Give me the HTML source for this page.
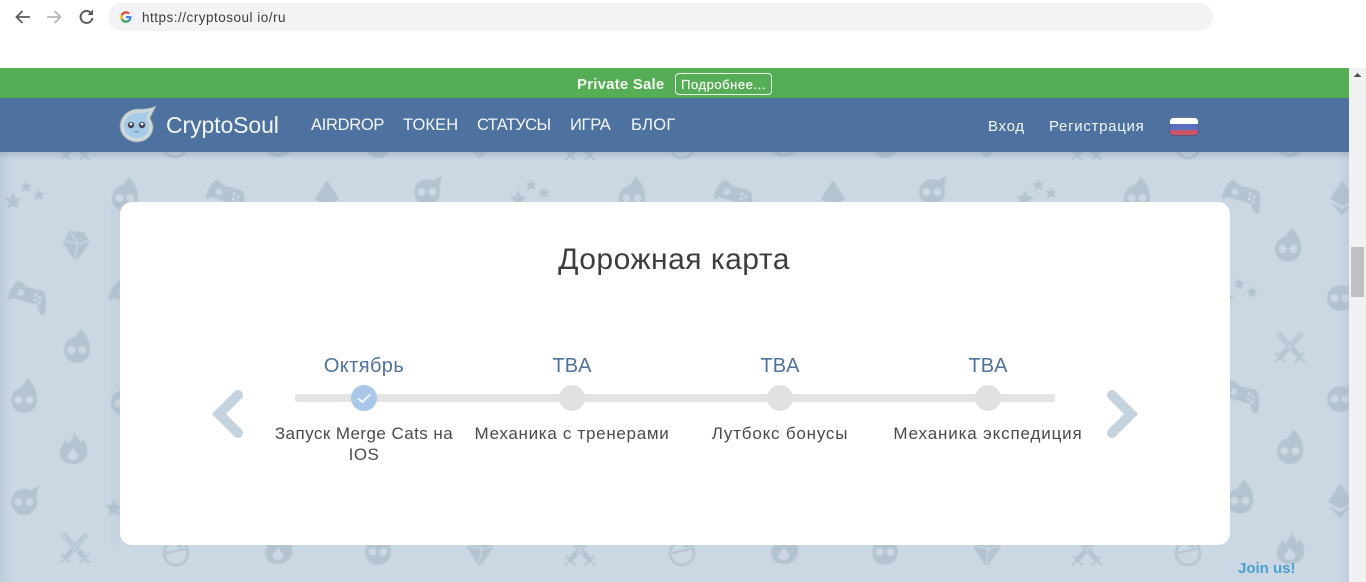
<!DOCTYPE html>
<html lang="ru">
<head>
<meta charset="utf-8">
<title>CryptoSoul</title>
<style>
html,body{margin:0;padding:0;width:1366px;height:582px;overflow:hidden;background:#fff;font-family:"Liberation Sans",sans-serif}
.a{position:absolute;white-space:nowrap}
#page{position:relative;width:1366px;height:582px;overflow:hidden}
.c{transform:translateX(-50%);text-align:center}
</style>
</head>
<body>
<div id="page">
<!-- browser bar -->
<svg class="a" style="left:12px;top:6px" width="90" height="22" viewBox="0 0 90 22" fill="none">
<path d="M18 11H5M10.500 5L4.500 11l6 6" stroke="#5a5d60" stroke-width="1.800"/>
<path d="M35 11H48M42.500 5l6 6-6 6" stroke="#b4b6b8" stroke-width="1.800"/>
<path d="M79.500 7.500A6 6 0 1 0 80.500 12" stroke="#5a5d60" stroke-width="2"/>
<path d="M75.500 9h5.500V3.500z" fill="#5a5d60"/>
</svg>
<div class="a" style="left:108px;top:3px;width:1105px;height:28px;border-radius:14px;background:#f1f3f4"></div>
<svg class="a" style="left:120px;top:11px" width="12" height="12" viewBox="0 0 48 48">
<path fill="#4285F4" d="M46 24.500c0-1.600-.1-3.100-.4-4.500H24v9h12.400c-.5 2.900-2.100 5.300-4.600 7l7.300 5.600C43.400 37.700 46 31.700 46 24.500z"/>
<path fill="#34A853" d="M24 47c6.200 0 11.400-2 15.100-5.500l-7.300-5.600c-2 1.400-4.700 2.200-7.800 2.200-6 0-11-4-12.800-9.500L3.700 34.400C7.400 41.900 15.100 47 24 47z"/>
<path fill="#FBBC05" d="M11.200 28.600c-.5-1.400-.7-3-.7-4.600s.3-3.200.7-4.600l-7.500-5.800C2.100 16.700 1 20.200 1 24s1.100 7.300 2.700 10.400z"/>
<path fill="#EA4335" d="M24 10c3.400 0 6.400 1.200 8.800 3.400l6.500-6.500C35.400 3.300 30.200 1 24 1 15.100 1 7.400 6.100 3.700 13.600l7.500 5.800C13 14 18 10 24 10z"/>
</svg>
<div class="a" style="left:142px;top:10px;font-size:13.500px;line-height:15px;color:#3c4043;letter-spacing:.5px">https://cryptosoul io/ru</div>

<!-- page background -->
<div class="a" id="bg" style="left:0;top:68px;width:1349px;height:514px;background:#cbd8e4"></div>

<svg class="a" style="left:0;top:68px;filter:blur(.6px)" width="1349" height="514" viewBox="0 68 1349 514" fill="#b3c3d0">
<defs>
<g id="bomb"><circle cx="0" cy="2" r="13"/><path d="M6-9L15-15 12-3z"/><circle cx="-5.500" cy="2" r="4" fill="#cbd8e4"/><circle cx="5.500" cy="2" r="4" fill="#cbd8e4"/></g>
<g id="bombf"><circle cx="0" cy="3" r="13"/><path d="M-2-9C-1-14 3-15 3-19 9-13 13-8 13 3L4-5z"/><circle cx="-5.500" cy="3" r="4" fill="#cbd8e4"/><circle cx="5.500" cy="3" r="4" fill="#cbd8e4"/></g>
<g id="stars"><path d="M-12-6l2.500 6 6.500.5-5 4 1.500 6.500-5.500-3.500-5.500 3.500 1.500-6.500-5-4 6.500-.5z"/><path d="M1-17l1.700 3.800 4.300.4-3.200 2.800 1 4.200-3.800-2.200-3.800 2.200 1-4.200-3.200-2.800 4.300-.4z"/><path d="M14-9l1.700 3.800 4.300.4-3.200 2.800 1 4.200-3.800-2.200-3.800 2.200 1-4.200-3.200-2.800 4.300-.4z"/></g>
<g id="pad"><path d="M-9-17C-5-17-3-13 0-11L16-7C20-4 20 6 18 15 16 18 13 17 12 13L10 7-14 0C-16 2-18 3-19 1-19-5-14-14-9-17z"/><path d="M-8-10l2 2.500 3-1-1 3 2 2-3 .5-1 3-1.500-3-3-.5 2-2z" fill="#cbd8e4"/><circle cx="9" cy="-3" r="1.600" fill="#cbd8e4"/><circle cx="13" cy="0" r="1.600" fill="#cbd8e4"/><circle cx="8" cy="2" r="1.600" fill="#cbd8e4"/><circle cx="12" cy="5" r="1.600" fill="#cbd8e4"/></g>
<g id="eth"><path d="M0-17L12 2 0 9-12 2z"/><path d="M-11 6L0 12 11 6 0 19z"/></g>
<g id="dia"><path d="M-7-14L8-13 14-3 2 14-2 15-13-2z"/><path d="M-1 13L2-1 13-4M2-1L-11-4M2-1L-5-12" stroke="#cbd8e4" stroke-width="1.300" fill="none"/></g>
<g id="sw" fill="none" stroke="#b3c3d0"><path d="M-12-14L9 9" stroke-width="5"/><path d="M12-14L-9 9" stroke-width="5"/><path d="M-13-15L3 3M13-15L-3 3" stroke="#cbd8e4" stroke-width="1"/><path d="M5 15L14 6M-5 15L-14 6M10 11L15 15M-10 11L-15 15" stroke-width="2"/></g>
<g id="smile"><circle r="12" fill="none" stroke="#b3c3d0" stroke-width="2.500"/><path d="M-10 0L9-4" stroke="#b3c3d0" stroke-width="2"/><path d="M1-11l6 1-1 5-5-1z"/></g>
<g id="fl"><path d="M1-19C3-12 7-12 7-7 9-9 10-10 10-11 14-6 15 0 14 4 12 11 6 14 0 14-7 14-13 10-13 3-13-3-9-6-8-11-6-9-5-7-5-6-2-9 1-13 1-19z"/><path d="M0-3C1 1 6 2 5 7 3 11-3 11-5 8-7 4-2 2 0-3z" fill="#cbd8e4"/></g>
</defs>
<!-- row under nav -->
<use href="#sw" x="75" y="145"/><use href="#smile" x="175" y="145"/><use href="#fl" x="278" y="143"/><use href="#bomb" x="378" y="143"/><use href="#dia" x="480" y="143"/><use href="#sw" x="580" y="145"/><use href="#smile" x="682" y="146"/><use href="#fl" x="784" y="143"/><use href="#bomb" x="885" y="143"/><use href="#dia" x="987" y="143"/><use href="#sw" x="1087" y="145"/><use href="#smile" x="1188" y="146"/><use href="#fl" x="1290" y="143"/>
<!-- top row -->
<use href="#stars" x="25" y="198"/><use href="#bombf" x="125" y="195"/><use href="#pad" x="225" y="197"/><use href="#eth" x="327" y="197"/><use href="#bomb" x="427" y="190"/><use href="#stars" x="530" y="196"/><use href="#bombf" x="632" y="195"/><use href="#pad" x="733" y="197"/><use href="#eth" x="833" y="197"/><use href="#bomb" x="932" y="190"/><use href="#stars" x="1037" y="196"/><use href="#bombf" x="1137" y="195"/><use href="#pad" x="1241" y="197"/><use href="#eth" x="1342" y="197"/>
<!-- left column -->
<use href="#dia" x="76" y="245"/><use href="#pad" x="27" y="298"/><use href="#pad" x="128" y="298"/><use href="#bombf" x="77" y="347"/><use href="#bombf" x="24" y="397"/><use href="#bombf" x="124" y="400"/><use href="#fl" x="73" y="450"/><use href="#bomb" x="24" y="500"/><use href="#stars" x="126" y="505"/><use href="#sw" x="75" y="548"/>
<!-- right column -->
<use href="#bombf" x="1288" y="246"/><use href="#stars" x="1238" y="295"/><use href="#bomb" x="1340" y="296"/><use href="#sw" x="1290" y="347"/><use href="#pad" x="1240" y="397"/><use href="#bomb" x="1340" y="397"/><use href="#bombf" x="1290" y="448"/><use href="#bombf" x="1240" y="498"/><use href="#eth" x="1340" y="500"/><use href="#fl" x="1290" y="550"/>
<!-- bottom row -->
<use href="#smile" x="176" y="553"/><use href="#fl" x="278" y="550"/><use href="#bomb" x="378" y="550"/><use href="#dia" x="480" y="550"/><use href="#sw" x="580" y="550"/><use href="#smile" x="682" y="553"/><use href="#fl" x="784" y="550"/><use href="#bomb" x="885" y="550"/><use href="#dia" x="987" y="550"/><use href="#sw" x="1087" y="550"/><use href="#smile" x="1188" y="553"/>
</svg>

<!-- soft shading over the pattern -->
<div class="a" style="left:0;top:152px;width:12px;height:430px;background:linear-gradient(90deg,rgba(165,185,200,.4),rgba(165,185,200,0))"></div>
<div class="a" style="left:100px;top:202px;width:20px;height:343px;background:linear-gradient(90deg,rgba(165,185,200,0),rgba(165,185,200,.22))"></div>
<div class="a" style="left:1339px;top:152px;width:10px;height:430px;background:linear-gradient(90deg,rgba(165,185,200,0),rgba(165,185,200,.35))"></div>
<div class="a" style="left:0;top:152px;width:1349px;height:8px;background:linear-gradient(rgba(120,140,160,.35),rgba(120,140,160,0))"></div>

<!-- scrollbar -->
<div class="a" style="left:1349px;top:68px;width:17px;height:514px;background:#f1f1f1"></div>
<div class="a" style="left:1351px;top:247px;width:13px;height:50px;background:#c1c1c1"></div>
<svg class="a" style="left:1352px;top:72px" width="11" height="6"><path d="M1.500 5L5.500 1 9.500 5z" fill="#505050"/></svg>

<!-- promo bar -->
<div class="a" style="left:0;top:68px;width:1349px;height:30px;background:#55ae55"></div>
<div class="a" style="left:577px;top:76px;font-size:15px;line-height:17px;font-weight:bold;color:#f4faf4;letter-spacing:.2px">Private Sale</div>
<div class="a" style="left:675px;top:73px;width:95px;height:20px;border:1px solid #eef7ee;border-radius:4px;font-size:13px;line-height:21px;text-align:center;color:#f8fcf8;letter-spacing:.55px;-webkit-text-stroke:.2px #f8fcf8">Подробнее...</div>

<!-- nav -->
<div class="a" style="left:0;top:98px;width:1349px;height:54px;background:#4d729f"></div>
<svg class="a" style="left:118px;top:103px" width="40" height="40" viewBox="0 0 40 40">
<path d="M38 3C31 6 26 6 20 6 10 6 2 14 2 23 2 32 10 39 19 39 29 39 36 31 35 22 34 19 33 17 32 15z" fill="#cdd8db" stroke="#8e9da6" stroke-width=".8"/>
<path d="M32 8C28 10 24 10 20 10 12 10 6 16 6 23 6 30 12 35 19 35 27 35 32 29 31 22 30 19 29 17 28 15z" fill="#a5cbe8"/>
<circle cx="13" cy="22" r="3.200" fill="#4a4256"/><circle cx="24" cy="22" r="3.200" fill="#4a4256"/>
<circle cx="13" cy="21" r="1.400" fill="#f2f2ff"/><circle cx="24" cy="21" r="1.400" fill="#f2f2ff"/>
<path d="M16 28q2.500 2 5 0" stroke="#6f8bb0" fill="none"/>
</svg>
<div class="a" style="left:166px;top:112px;font-size:23px;line-height:27px;color:#f3f6fa;letter-spacing:-.1px">CryptoSoul</div>
<div class="a" style="left:311px;top:116px;font-size:16.500px;line-height:19px;color:#f3f6fa;letter-spacing:-.3px">AIRDROP</div>
<div class="a" style="left:403px;top:116px;font-size:16.500px;line-height:19px;color:#f3f6fa;letter-spacing:.1px">ТОКЕН</div>
<div class="a" style="left:477px;top:116px;font-size:16.500px;line-height:19px;color:#f3f6fa;letter-spacing:-.6px">СТАТУСЫ</div>
<div class="a" style="left:570px;top:116px;font-size:16.500px;line-height:19px;color:#f3f6fa;letter-spacing:-.3px">ИГРА</div>
<div class="a" style="left:631px;top:116px;font-size:16.500px;line-height:19px;color:#f3f6fa;letter-spacing:.3px">БЛОГ</div>
<div class="a" style="left:988px;top:118px;font-size:15px;line-height:18px;color:#f3f6fa;letter-spacing:.7px">Вход</div>
<div class="a" style="left:1049px;top:118px;font-size:15px;line-height:18px;color:#f3f6fa;letter-spacing:.7px">Регистрация</div>
<svg class="a" style="left:1169px;top:117px" width="30" height="19" viewBox="0 0 30 19">
<defs><clipPath id="fc"><rect x=".5" y=".5" width="29" height="18" rx="4"/></clipPath></defs>
<g clip-path="url(#fc)"><rect width="30" height="7" fill="#fff"/><rect y="7" width="30" height="6" fill="#5a6fc0"/><rect y="13" width="30" height="6" fill="#c9566a"/></g>
<rect x=".5" y=".5" width="29" height="18" rx="4" fill="none" stroke="#3e4d66" stroke-opacity=".6"/>
</svg>

<!-- card -->
<div class="a" style="left:120px;top:202px;width:1110px;height:343px;background:#fff;border-radius:12px"></div>
<div class="a c" style="left:674px;top:242px;font-size:30px;line-height:36px;color:#3d3d3d;letter-spacing:.5px">Дорожная карта</div>

<div class="a" style="left:295px;top:394px;width:760px;height:8px;background:#e4e4e4;border-radius:2px"></div>
<div class="a" style="left:351px;top:385px;width:26px;height:26px;border-radius:50%;background:#a9c7e8"></div>
<svg class="a" style="left:351px;top:385px" width="26" height="26"><path d="M7 13.500l4.500 3.500 7.500-7.500" fill="none" stroke="#eef4fb" stroke-width="2"/></svg>
<div class="a" style="left:559px;top:385px;width:26px;height:26px;border-radius:50%;background:#e0e0e0"></div>
<div class="a" style="left:767px;top:385px;width:26px;height:26px;border-radius:50%;background:#e0e0e0"></div>
<div class="a" style="left:975px;top:385px;width:26px;height:26px;border-radius:50%;background:#e0e0e0"></div>

<div class="a c" style="left:364px;top:355px;font-size:20px;line-height:23px;color:#4d729f;letter-spacing:.4px">Октябрь</div>
<div class="a c" style="left:572px;top:355px;font-size:20px;line-height:23px;color:#4d729f">TBA</div>
<div class="a c" style="left:780px;top:355px;font-size:20px;line-height:23px;color:#4d729f">TBA</div>
<div class="a c" style="left:988px;top:355px;font-size:20px;line-height:23px;color:#4d729f">TBA</div>

<div class="a c" style="left:364px;top:423px;font-size:17px;line-height:21px;color:#4a4a4a;letter-spacing:.45px">Запуск Merge Cats на<br>IOS</div>
<div class="a c" style="left:572px;top:423px;font-size:17px;line-height:21px;color:#4a4a4a;letter-spacing:.7px">Механика с тренерами</div>
<div class="a c" style="left:780px;top:423px;font-size:17px;line-height:21px;color:#4a4a4a;letter-spacing:.8px">Лутбокс бонусы</div>
<div class="a c" style="left:988px;top:423px;font-size:17px;line-height:21px;color:#4a4a4a;letter-spacing:.85px">Механика экспедиция</div>

<svg class="a" style="left:205px;top:385px" width="945" height="60" viewBox="0 0 945 60" fill="none" stroke="#c3d2dc" stroke-width="10" stroke-linecap="round" stroke-linejoin="miter">
<path d="M33 10L14 29 33 48"/>
<path d="M907 10L926 29 907 48"/>
</svg>

<div class="a" style="left:1238px;top:560px;font-size:15px;line-height:17px;font-weight:bold;color:#4a9fd0">Join us!</div>
</div>
</body>
</html>
